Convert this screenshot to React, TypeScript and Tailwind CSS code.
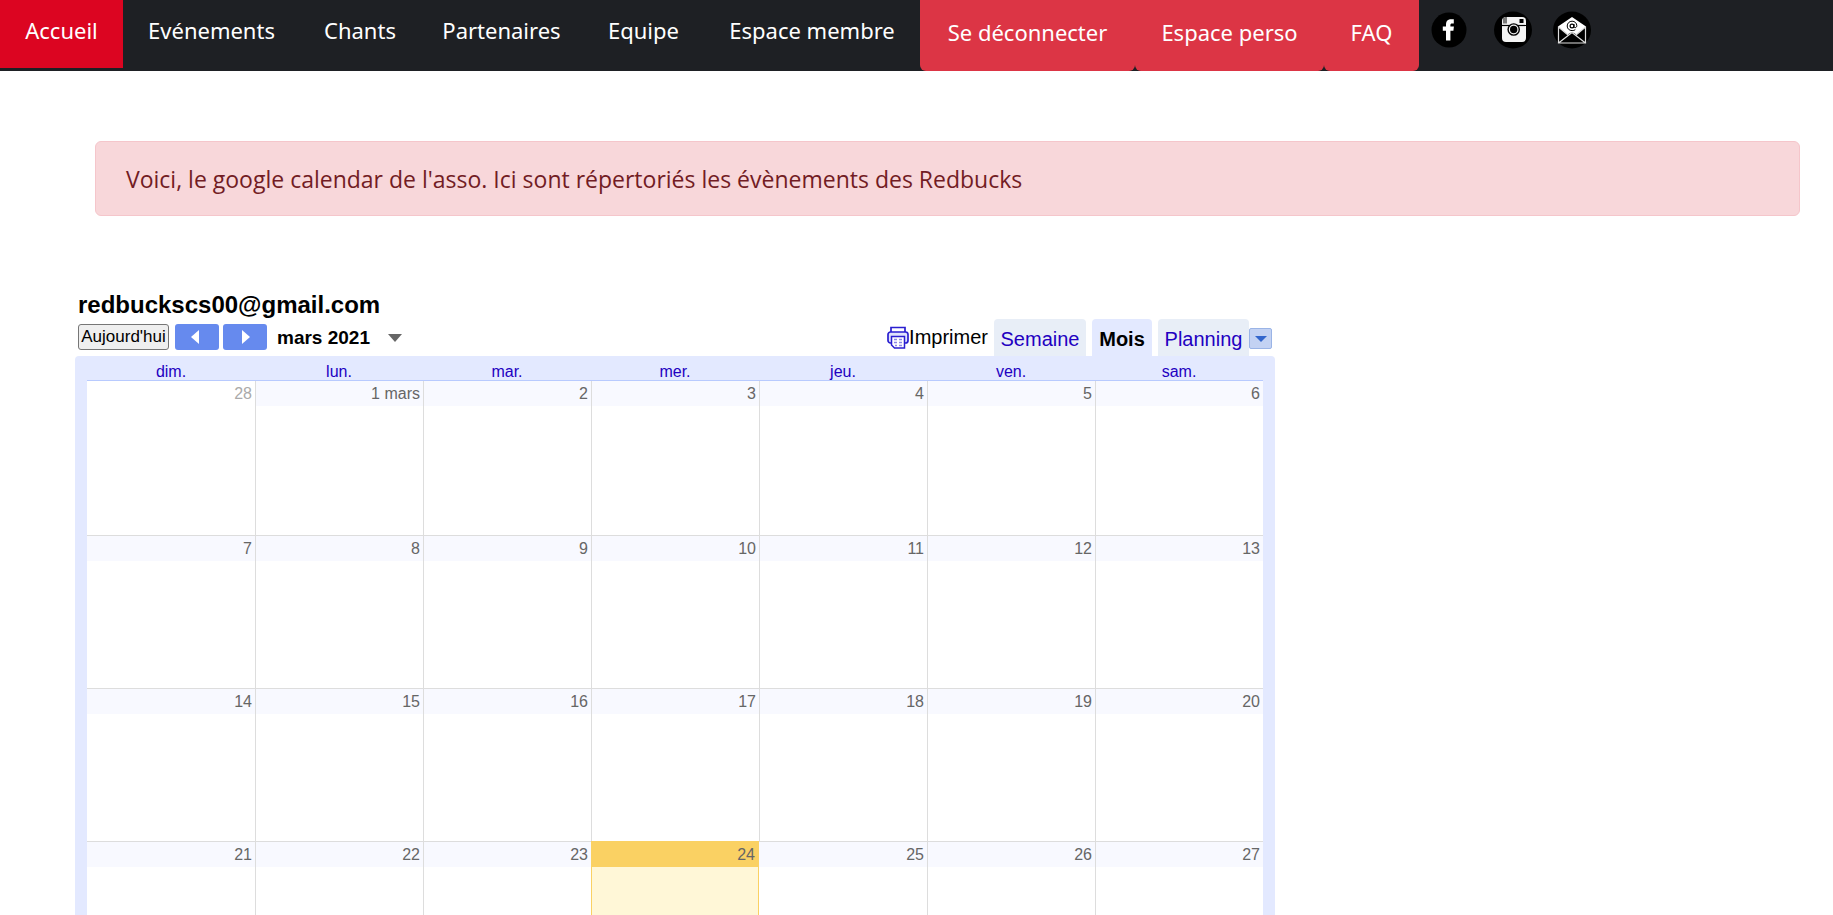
import React from "react";

const links = [
  { label: "Accueil", style: "w-[123px] bg-[#dc0521]" },
  { label: "Evénements", style: "w-[177px]" },
  { label: "Chants", style: "w-[120px]" },
  { label: "Partenaires", style: "w-[163px]" },
  { label: "Equipe", style: "w-[121px]" },
  { label: "Espace membre", style: "w-[216px]" },
];

const actions = [
  { label: "Se déconnecter", style: "w-[215px]" },
  { label: "Espace perso", style: "w-[189px]" },
  { label: "FAQ", style: "w-[95px]" },
];

const days = ["dim.", "lun.", "mar.", "mer.", "jeu.", "ven.", "sam."];

const weeks = [
  ["28", "1 mars", "2", "3", "4", "5", "6"],
  ["7", "8", "9", "10", "11", "12", "13"],
  ["14", "15", "16", "17", "18", "19", "20"],
  ["21", "22", "23", "24", "25", "26", "27"],
];

function FacebookIcon() {
  return (
    <svg width="36" height="36" viewBox="0 0 36 36" aria-hidden="true">
      <circle cx="18" cy="18" r="17.5" fill="#000" />
      <path d="M15 28.500V18.700h-3.200v-4.200H15v-1.800c0-3.800 1.900-5.500 5.400-5.500h2.400v4.200h-1.700c-1.300 0-1.700.5-1.700 1.600v1.500h3.500l-.5 4.200h-3v9.800z" fill="#fff" />
    </svg>
  );
}

function InstagramIcon() {
  return (
    <svg width="38" height="38" viewBox="0 0 38 38" aria-hidden="true">
      <ellipse cx="19" cy="19" rx="19" ry="18.500" fill="#000" />
      <rect x="8" y="6" width="24" height="25" rx="4" fill="#f4f4f4" />
      <path d="M10 6.500v6M12 6v6.500" stroke="#000" strokeWidth="1" />
      <rect x="25.500" y="8" width="4" height="4" fill="#000" />
      <path d="M8 14.500h24" stroke="#000" strokeWidth="1.200" />
      <circle cx="19.700" cy="18.500" r="6.300" fill="#000" />
      <circle cx="19.700" cy="18.500" r="4.300" fill="none" stroke="#f4f4f4" strokeWidth="1.200" />
    </svg>
  );
}

function MailIcon() {
  return (
    <svg width="38" height="38" viewBox="0 0 38 38" aria-hidden="true">
      <ellipse cx="19" cy="19" rx="19" ry="18.500" fill="#000" />
      <path d="M5 15.500L19 6l14 9.500-9.500 8-4.500-2.500-4.500 2.500z" fill="#fff" />
      <path d="M5.500 15.500V32h27V15.500M5.500 32L19 21.500 32.500 32M5.500 16l9.500 8M32.500 16L23 24" fill="none" stroke="#ddd" strokeWidth="1.200" />
      <circle cx="19" cy="15" r="1.900" fill="none" stroke="#000" strokeWidth="1.200" />
      <path d="M21 13v2.500c0 1.800 2.800 1.600 2.800-.8 0-2.500-2-4.500-4.700-4.500-2.800 0-4.900 2.100-4.900 4.800s2.100 4.600 4.900 4.600c1.300 0 2.300-.3 3.200-.9" fill="none" stroke="#000" strokeWidth="1" />
    </svg>
  );
}

function PrintIcon() {
  return (
    <svg width="22" height="23" viewBox="0 0 22 23" aria-hidden="true">
      <path d="M4 7V1.500h14V7" fill="#fff" stroke="#2a1fd0" strokeWidth="1.700" />
      <rect x="1" y="6" width="20" height="11" rx="2.500" fill="#dfe3fc" stroke="#2a1fd0" strokeWidth="1.700" />
      <path d="M4.500 10.500h13v11.500h-10l-3-3z" fill="#fff" stroke="#2a1fd0" strokeWidth="1.500" />
      <path d="M7 13.500h3M12 13.500h3M7 16.500h3M12 16.500h3M8 19.500h2M12 19.500h3" stroke="#8d86e6" strokeWidth="1.500" />
    </svg>
  );
}

export default function App() {
  return (
    <div className="h-screen overflow-hidden bg-white">
      <nav className="flex h-[71px] items-start bg-[#1e2024] font-['Noto_Sans',sans-serif] text-[22px] leading-8 text-white">
        {links.map((l) => (
          <a key={l.label} href="#" className={`flex h-[68px] shrink-0 justify-center pt-3.5 whitespace-nowrap ${l.style}`}>
            {l.label}
          </a>
        ))}
        {actions.map((a) => (
          <button key={a.label} type="button" className={`flex h-[71px] shrink-0 justify-center rounded-b-md bg-[#dc3545] pt-4 whitespace-nowrap ${a.style}`}>
            {a.label}
          </button>
        ))}
        <div className="ml-3 flex h-[60px] shrink-0 items-center">
          <a href="#" aria-label="Facebook"><FacebookIcon /></a>
          <a href="#" aria-label="Instagram" className="ml-[27px]"><InstagramIcon /></a>
          <a href="#" aria-label="E-mail" className="ml-[21px]"><MailIcon /></a>
        </div>
      </nav>

      <p role="alert" className="mt-[70px] mr-[33px] ml-[95px] flex h-[75px] items-center rounded-md border border-[#f5c6cb] bg-[#f8d7da] px-[30px] pt-0.5 font-['Open_Sans',sans-serif] text-[23px] text-[#721c24]">
        Voici, le google calendar de l'asso. Ici sont répertoriés les évènements des Redbucks
      </p>

      <main className="mt-[73px] ml-[75px] w-[1200px] font-['Liberation_Sans',sans-serif]">
        <h1 className="pl-[3px] text-2xl leading-8 font-bold text-black">redbuckscs00@gmail.com</h1>
        <div className="-mt-0.5 flex h-[37px] items-end pr-[3px] pl-[3px]">
          <div className="mb-1.5 flex h-[26px] flex-1 items-center">
            <button type="button" className="h-[26px] w-[91px] rounded-[3px] border border-[#767676] bg-[#efefef] text-[17px] leading-5 text-black">Aujourd'hui</button>
            <button type="button" aria-label="Mois précédent" className="ml-1.5 flex h-[26px] w-11 items-center justify-center rounded-[3px] bg-[#668aee] pr-1">
              <svg width="8" height="14" viewBox="0 0 8 14"><path d="M8 0v14L0 7z" fill="#fff" /></svg>
            </button>
            <button type="button" aria-label="Mois suivant" className="ml-1 flex h-[26px] w-11 items-center justify-center rounded-[3px] bg-[#668aee] pl-0.5">
              <svg width="8" height="14" viewBox="0 0 8 14"><path d="M0 0v14l8-7z" fill="#fff" /></svg>
            </button>
            <button type="button" className="ml-2.5 flex items-center gap-[18px] pt-0.5 text-[19px] leading-6 font-bold text-black">
              mars 2021
              <svg width="14" height="8" viewBox="0 0 14 8" aria-hidden="true"><path d="M0 0h14L7 8z" fill="#666" /></svg>
            </button>
          </div>
          <button type="button" className="mr-1.5 mb-[7px] flex items-center text-[20px] leading-6 text-black">
            <PrintIcon />
            Imprimer
          </button>
          <button type="button" className="h-[37px] w-[92px] rounded-t-[4px] bg-[#e8eef7] pt-0.5 text-[20px] text-[#2200c1]">Semaine</button>
          <button type="button" className="ml-1.5 h-[37px] w-[60px] rounded-t-[4px] bg-[#e3e9ff] pt-0.5 text-[20px] font-bold text-black">Mois</button>
          <button type="button" className="ml-1.5 h-[37px] w-[91px] rounded-t-[4px] bg-[#e8eef7] pt-0.5 text-[20px] text-[#2200c1]">Planning</button>
          <button type="button" aria-label="Choisir l'agenda" className="mb-[7px] flex h-[21px] w-[23px] items-center justify-center rounded-[2px] border border-[#9ab4e6] bg-[#c3d2f3]">
            <svg width="12" height="6" viewBox="0 0 12 6"><path d="M0 0h12L6 6z" fill="#3366cc" /></svg>
          </button>
        </div>
        <div className="rounded-t-[4px] bg-[#e3e9ff] px-3">
          <table className="w-full table-fixed border-separate border-spacing-0">
            <thead>
              <tr>
                {days.map((d) => (
                  <th key={d} scope="col" className="h-[25px] border-b border-[#b8cafe] p-0 pt-2 text-[16px] leading-4 font-normal text-[#2200c1]">{d}</th>
                ))}
              </tr>
            </thead>
            <tbody>
              {weeks.map((w, i) => (
                <tr key={w[0]}>
                  {w.map((d, j) => {
                    const today = d === "24";
                    const line = i === 0 ? "h-[154px]" : today ? "h-[153px] border-t border-[#fad163]" : "h-[153px] border-t border-[#dddddd]";
                    const side = today ? "border-x border-x-[#fad163]" : j === 0 || d === "25" ? "" : "border-l border-l-[#dddddd]";
                    const body = today ? "bg-[#fff7d7]" : "bg-white";
                    const head = today ? "bg-[#fad163] text-[#666666]" : i === 0 && j === 0 ? "bg-white text-[#aaaaaa]" : "bg-[#f8f9ff] text-[#666666]";
                    return (
                      <td key={d} className={`p-0 align-top ${line} ${side} ${body}`}>
                        <div className={`h-[25px] pr-[3px] text-right text-[16px] leading-[26px] ${head}`}>{d}</div>
                      </td>
                    );
                  })}
                </tr>
              ))}
            </tbody>
          </table>
        </div>
      </main>
    </div>
  );
}
